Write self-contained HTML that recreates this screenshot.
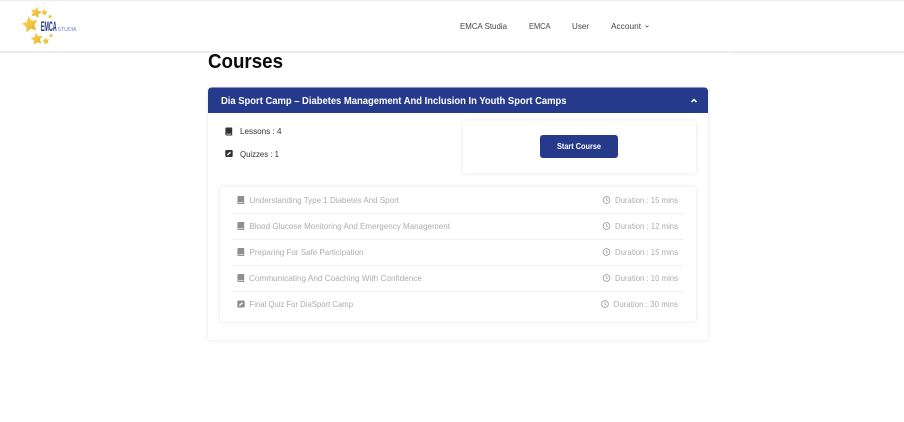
<!DOCTYPE html>
<html>
<head>
<meta charset="utf-8">
<style>
html,body{margin:0;padding:0;background:#fff;width:904px;height:422px;overflow:hidden}
svg{display:block}
text{font-family:"Liberation Sans",sans-serif}
</style>
</head>
<body>
<svg width="904" height="422" viewBox="0 0 904 422" xmlns="http://www.w3.org/2000/svg">
<defs>
<filter id="s" x="-5%" y="-5%" width="110%" height="110%"><feDropShadow dx="0" dy="0" stdDeviation="2" flood-color="#000" flood-opacity=".1"/></filter>
<filter id="b" x="-5%" y="-5%" width="110%" height="110%"><feGaussianBlur stdDeviation="0.35"/></filter>
<filter id="t" x="-2%" y="-20%" width="104%" height="140%"><feGaussianBlur stdDeviation="0.22"/></filter>
<linearGradient id="g" x1="0" y1="0" x2="1" y2="1"><stop offset="0" stop-color="#f8dd7a"/><stop offset="1" stop-color="#e5ac14"/></linearGradient>
<symbol id="book" viewBox="0 0 8 8"><path d="M1.6 0H7.2V8H1.6C.8 8 .4 7.5.4 6.800V1.200C.4.5.8 0 1.600 0Z" fill="currentColor"/><path d="M1.400 6.200H6.400V7H1.400Z" fill="#fff" opacity=".85"/></symbol>
<symbol id="quiz" viewBox="0 0 8 8"><rect x=".3" y=".5" width="7.400" height="7" rx="1" fill="currentColor"/><path d="M2 6L2.200 4.900 4.900 2.300 5.900 3.200 3.100 5.800Z" fill="#fff"/></symbol>
<symbol id="clock" viewBox="0 0 8 8"><circle cx="4" cy="4" r="3.400" fill="none" stroke="currentColor" stroke-width=".75"/><path d="M4 2V4.200L5.300 5" fill="none" stroke="currentColor" stroke-width=".7"/></symbol>
<polygon id="star" points="0,-10 3,-3.800 9.500,-3.100 4.800,1.500 5.900,8.100 0,5 -5.900,8.100 -4.800,1.500 -9.500,-3.100 -3,-3.800" fill="url(#g)"/>
</defs>

<!-- header -->
<rect x="0" y="0" width="904" height="1" fill="#ecedf1"/>
<rect x="733" y="53" width="171" height="1.500" fill="#f7f7f7"/>
<rect x="0" y="51" width="904" height="2" fill="#ececec"/>

<!-- logo -->
<g filter="url(#b)">
<use href="#star" transform="translate(30 24.500) rotate(-12) scale(.85)"/>
<use href="#star" transform="translate(36 12.500) rotate(14) scale(.6)"/>
<use href="#star" transform="translate(44.300 12.300) rotate(10) scale(.34)"/>
<use href="#star" transform="translate(50 16.500) rotate(10) scale(.24)"/>
<use href="#star" transform="translate(36.700 39) rotate(-10) scale(.65)"/>
<use href="#star" transform="translate(45.700 41) rotate(-10) scale(.38)"/>
<use href="#star" transform="translate(51 35.500) rotate(10) scale(.24)"/>
<text x="40.700" y="31" font-size="14" textLength="16" lengthAdjust="spacingAndGlyphs" fill="#26398c" font-weight="700">EMCA</text>
<text x="57.500" y="31" font-size="5.500" textLength="19" lengthAdjust="spacingAndGlyphs" fill="#7585c0">STUDIA</text>
</g>

<g filter="url(#t)">
<!-- nav -->
<g font-size="8.500" fill="#444">
<text x="460" y="29" textLength="47" lengthAdjust="spacingAndGlyphs">EMCA Studia</text>
<text x="529" y="29" textLength="21.500" lengthAdjust="spacingAndGlyphs">EMCA</text>
<text x="572" y="29" textLength="17" lengthAdjust="spacingAndGlyphs">User</text>
<text x="611" y="29" textLength="30" lengthAdjust="spacingAndGlyphs">Account</text>
</g>
</g>
<path d="M645.500 25.500L647 27 648.500 25.500" fill="none" stroke="#555" stroke-width=".8"/>

<!-- title -->
<text x="208" y="68" font-size="20.500" font-weight="700" fill="#0a0a0a" textLength="75" lengthAdjust="spacingAndGlyphs">Courses</text>

<!-- outer card -->
<rect x="208" y="88" width="500" height="252" rx="3" fill="#fff" filter="url(#s)"/>
<path d="M208 113V91a3.500 3.500 0 0 1 3.500-3.500H704.500a3.500 3.500 0 0 1 3.500 3.500V113Z" fill="#263a8b"/>
<text x="221" y="104" font-size="10.500" font-weight="700" fill="#fff" textLength="345.500" lengthAdjust="spacingAndGlyphs">Dia Sport Camp – Diabetes Management And Inclusion In Youth Sport Camps</text>
<path d="M691.500 102L694 99.500 696.500 102" fill="none" stroke="#fff" stroke-width="1.500"/>

<!-- lessons -->
<use href="#book" x="225" y="127.500" width="8" height="8" color="#333"/>
<use href="#quiz" x="225" y="149.500" width="8" height="8" color="#333"/>
<g font-size="8.500" fill="#333" filter="url(#t)">
<text x="240" y="134" textLength="41.500" lengthAdjust="spacingAndGlyphs">Lessons : 4</text>
<text x="240" y="157" textLength="39" lengthAdjust="spacingAndGlyphs">Quizzes : 1</text>
</g>

<!-- start card -->
<rect x="463" y="120.500" width="233" height="53" rx="3" fill="#fff" filter="url(#s)"/>
<rect x="540" y="135" width="78" height="23" rx="3" fill="#263a8b"/>
<text x="557" y="149" font-size="8" font-weight="700" fill="#fff" textLength="44" lengthAdjust="spacingAndGlyphs">Start Course</text>

<!-- list card -->
<rect x="220" y="187" width="476" height="134.500" rx="3" fill="#fff" filter="url(#s)"/>
<g fill="#f0f0f0">
<rect x="232" y="213" width="451" height="1"/>
<rect x="232" y="239" width="451" height="1"/>
<rect x="232" y="265" width="451" height="1"/>
<rect x="232" y="291" width="451" height="1"/>
</g>
<g color="#8f8f8f">
<use href="#book" x="237" y="196" width="8" height="8"/>
<use href="#book" x="237" y="222" width="8" height="8"/>
<use href="#book" x="237" y="248" width="8" height="8"/>
<use href="#book" x="237" y="274" width="8" height="8"/>
<use href="#quiz" x="237" y="300" width="8" height="8"/>
<use href="#clock" x="602.500" y="196" width="8" height="8"/>
<use href="#clock" x="602.500" y="222" width="8" height="8"/>
<use href="#clock" x="602.500" y="248" width="8" height="8"/>
<use href="#clock" x="602.500" y="274" width="8" height="8"/>
<use href="#clock" x="601" y="300" width="8" height="8"/>
</g>
<g font-size="8.500" fill="#adadad" filter="url(#t)">
<text x="249.500" y="203" textLength="149.500" lengthAdjust="spacingAndGlyphs">Understanding Type 1 Diabetes And Sport</text>
<text x="249.500" y="229" textLength="200.500" lengthAdjust="spacingAndGlyphs">Blood Glucose Monitoring And Emergency Management</text>
<text x="249.500" y="255" textLength="114" lengthAdjust="spacingAndGlyphs">Preparing For Safe Participation</text>
<text x="249" y="281" textLength="173" lengthAdjust="spacingAndGlyphs">Communicating And Coaching With Confidence</text>
<text x="249.500" y="307" textLength="103.500" lengthAdjust="spacingAndGlyphs">Final Quiz For DiaSport Camp</text>
<text x="615" y="203" textLength="63" lengthAdjust="spacingAndGlyphs">Duration : 15 mins</text>
<text x="615" y="229" textLength="63" lengthAdjust="spacingAndGlyphs">Duration : 12 mins</text>
<text x="615" y="255" textLength="63" lengthAdjust="spacingAndGlyphs">Duration : 15 mins</text>
<text x="615" y="281" textLength="63" lengthAdjust="spacingAndGlyphs">Duration : 10 mins</text>
<text x="613.500" y="307" textLength="64.500" lengthAdjust="spacingAndGlyphs">Duration : 30 mins</text>
</g>
</svg>
</body>
</html>
